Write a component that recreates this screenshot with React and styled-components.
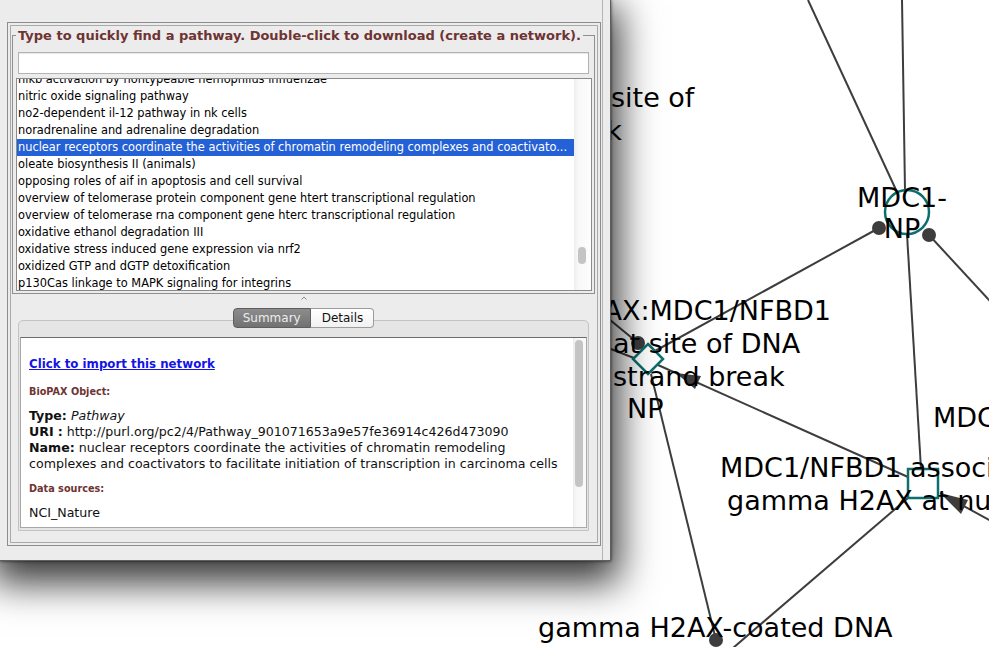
import styled, { createGlobalStyle } from 'styled-components';

const GlobalStyle = createGlobalStyle`
  html, body {
    margin: 0;
    padding: 0;
    background: #fff;
    overflow: hidden;
  }
  * {
    box-sizing: border-box;
  }
`;

const Desktop = styled.div`
  position: relative;
  width: 989px;
  height: 647px;
  overflow: hidden;
  background: #fff;
  font-family: "DejaVu Sans", "Liberation Sans", sans-serif;
`;

const Canvas = styled.svg`
  position: absolute;
  left: 0;
  top: 0;
  width: 989px;
  height: 647px;
`;

const Dialog = styled.div`
  position: absolute;
  left: 0;
  top: 0;
  width: 611px;
  height: 561px;
  display: flex;
  background: #ececec;
  border-right: 1px solid #5f5f5f;
  border-bottom: 1px solid #5f5f5f;
  box-shadow: 0 0 3px rgba(0, 0, 0, 0.7), 0 14px 36px 8px rgba(0, 0, 0, 0.78);
`;

const Body = styled.div`
  width: 603px;
  display: flex;
  flex-direction: column;
  border-right: 1px solid #b4b4b4;
`;

const TopStrip = styled.div`
  height: 22px;
  flex: none;
`;

const Frame = styled.div`
  margin-left: 7px;
  width: 594px;
  height: 524px;
  flex: none;
  border: 1px solid #8c8c8c;
  box-shadow: inset 0 0 0 2px #ececec, inset 0 0 0 3px #a9a9a9;
  padding: 5px 5px 0 4px;
  display: flex;
  flex-direction: column;
`;

const Group = styled.fieldset`
  margin: 0;
  padding: 9px 2px 2px 3px;
  border: 1px solid #8f8f8f;
  min-width: 0;
`;

const GroupTitle = styled.legend`
  padding: 0 2px;
  font: bold 13px/15px "DejaVu Sans", sans-serif;
  color: #6e3333;
  white-space: nowrap;
`;

const SearchField = styled.div`
  height: 22px;
  margin: 0 3px 4px 2px;
  background: #fff;
  border: 1px solid #b3b3b3;
  box-shadow: inset 0 1px 1px rgba(0, 0, 0, 0.1);
`;

const ListBox = styled.div`
  height: 213px;
  display: flex;
  background: #fff;
  border: 1px solid #8a8a8a;
  overflow: hidden;
`;

const ListViewport = styled.div`
  flex: 1;
  min-width: 0;
  overflow: hidden;
`;

const ListRows = styled.div`
  margin-top: ${(p) => -p.$scroll}px;
`;

const Row = styled.div`
  height: 17px;
  line-height: 17px;
  padding-left: 1px;
  font-size: 11.4px;
  white-space: nowrap;
  overflow: hidden;
  color: ${(p) => (p.$selected ? '#fff' : '#000')};
  background: ${(p) => (p.$selected ? '#2461d6' : 'transparent')};
`;

const ListScroll = styled.div`
  width: 17px;
  flex: none;
  padding: ${(p) => p.$top}px 0 0 4px;
  background: linear-gradient(to right, #ececec, #f8f8f8 4px, #fdfdfd);
`;

const Thumb = styled.div`
  width: 8px;
  height: ${(p) => p.$h}px;
  border-radius: 4px;
  background: #c4c4c4;
`;

const Divider = styled.div`
  height: 14px;
  flex: none;
  display: flex;
  justify-content: center;
  padding-top: 2px;
`;

const TabPane = styled.div`
  margin: 0 6px;
  display: flex;
  flex-direction: column;
`;

const TabRow = styled.div`
  height: 20px;
  display: flex;
  justify-content: center;
  position: relative;
  z-index: 1;
  margin-bottom: -8px;
`;

const Tab = styled.div`
  height: 20px;
  font-size: 12px;
  line-height: 18px;
  border: 1px solid ${(p) => (p.$active ? '#5e5e5e' : '#9c9c9c')};
  border-left-width: ${(p) => (p.$active ? 1 : 0)}px;
  border-radius: ${(p) => (p.$active ? '4px 0 0 4px' : '0 4px 4px 0')};
  padding: ${(p) => (p.$active ? '0 9px' : '0 10px 0 11px')};
  color: ${(p) => (p.$active ? '#ededed' : '#111')};
  background: ${(p) =>
    p.$active
      ? 'linear-gradient(#8c8c8c, #727272)'
      : 'linear-gradient(#ffffff, #f1f1f1)'};
`;

const TabBox = styled.div`
  height: 211px;
  display: flex;
  border: 1px solid #c3c3c3;
  border-radius: 5px 5px 0 0;
  background: #e5e5e5;
  padding: 16px 1px 2px 1px;
`;

const InfoPanel = styled.div`
  flex: 1;
  display: flex;
  background: #fff;
  border: 1px solid #a8a8a8;
  border-top-color: #6c6c6c;
  overflow: hidden;
`;

const InfoBody = styled.div`
  flex: 1;
  min-width: 0;
  padding: 18px 8px 0 8px;
  font-size: 12.6px;
  line-height: 16px;
  color: #111;
  white-space: nowrap;
`;

const InfoScroll = styled.div`
  width: 13px;
  flex: none;
  padding: 2px 0 0 2px;
  background: linear-gradient(to right, #ebebeb, #f7f7f7 3px, #f9f9f9);
`;

const ImportLink = styled.a`
  display: block;
  height: 16px;
  font-size: 11.8px;
  font-weight: bold;
  color: #1414e6;
  text-decoration: underline;
`;

const Section = styled.div`
  margin-top: ${(p) => p.$gap}px;
  font-size: 9.7px;
  font-weight: bold;
  color: #6e3333;
`;

const Line = styled.div`
  margin-top: ${(p) => p.$gap || 0}px;
  height: 16px;
`;

const Key = styled.b`
  font-weight: bold;
`;

const pathways = [
  'nikb activation by nontypeable hemophilus influenzae',
  'nitric oxide signaling pathway',
  'no2-dependent il-12 pathway in nk cells',
  'noradrenaline and adrenaline degradation',
  'nuclear receptors coordinate the activities of chromatin remodeling complexes and coactivato...',
  'oleate biosynthesis II (animals)',
  'opposing roles of aif in apoptosis and cell survival',
  'overview of telomerase protein component gene htert transcriptional regulation',
  'overview of telomerase rna component gene hterc transcriptional regulation',
  'oxidative ethanol degradation III',
  'oxidative stress induced gene expression via nrf2',
  'oxidized GTP and dGTP detoxification',
  'p130Cas linkage to MAPK signaling for integrins',
];

const edges = [
  [808, 0, 897, 192],
  [902, 0, 905, 190],
  [907, 234, 921, 469],
  [879, 228, 655, 351],
  [929, 235, 1000, 312],
  [908, 477, 658, 365],
  [651, 374, 716, 640],
  [908, 498, 719, 660],
  [1000, 526, 940, 493],
  [598, 310, 638, 343],
  [598, 344, 634, 358],
];

const dots = [
  [879, 228],
  [929, 235],
  [638, 343],
  [716, 640],
];

const labels = [
  { x: 611, y: 107, t: 'site of' },
  { x: 622, y: 140, t: 'break', a: 'end' },
  { x: 902, y: 207, t: 'MDC1-', a: 'middle' },
  { x: 902, y: 238, t: 'NP', a: 'middle' },
  { x: 831, y: 320, t: 'gamma H2AX:MDC1/NFBD1', a: 'end' },
  { x: 613, y: 353, t: 'at site of DNA' },
  { x: 613, y: 386, t: 'strand break' },
  { x: 627, y: 418, t: 'NP' },
  { x: 933, y: 427, t: 'MDC1/NFBD1' },
  { x: 720, y: 477, t: 'MDC1/NFBD1 associates with' },
  { x: 727, y: 510, t: 'gamma H2AX at nuclear foci' },
  { x: 538, y: 637, t: 'gamma H2AX-coated DNA' },
];

function Network() {
  const teal = '#0e6f6f';
  return (
    <Canvas viewBox="0 0 989 647">
      <g stroke="#3d3d3d" strokeWidth="2" fill="none">
        {edges.map(([x1, y1, x2, y2], i) => (
          <line key={i} x1={x1} y1={y1} x2={x2} y2={y2} />
        ))}
      </g>
      <g fill="#3d3d3d">
        {dots.map(([cx, cy], i) => (
          <circle key={i} cx={cx} cy={cy} r="7" />
        ))}
        <polygon points="676,373 695,389 701,376" />
        <polygon points="940,493 968,500 961,514" />
      </g>
      <g stroke={teal} strokeWidth="2.5" fill="none">
        <circle cx="907" cy="212" r="22" />
        <polygon points="648,344 663,359 648,374 633,359" />
        <rect x="908" y="469" width="30" height="29" />
      </g>
      <g fontFamily="DejaVu Sans, sans-serif" fontSize="27" fill="#000">
        {labels.map((l, i) => (
          <text key={i} x={l.x} y={l.y} textAnchor={l.a || 'start'}>
            {l.t}
          </text>
        ))}
      </g>
    </Canvas>
  );
}

export default function App() {
  return (
    <Desktop>
      <GlobalStyle />
      <Network />
      <Dialog>
        <Body>
          <TopStrip />
          <Frame>
            <Group>
              <GroupTitle>
                Type to quickly find a pathway. Double-click to download (create a network).
              </GroupTitle>
              <SearchField />
              <ListBox>
                <ListViewport>
                  <ListRows $scroll={8}>
                    {pathways.map((name, i) => (
                      <Row key={name} $selected={i === 4}>
                        {name}
                      </Row>
                    ))}
                  </ListRows>
                </ListViewport>
                <ListScroll $top={168}>
                  <Thumb $h={17} />
                </ListScroll>
              </ListBox>
            </Group>
            <Divider>
              <svg width="6" height="4" viewBox="0 0 6 4">
                <path d="M0.5 3.5 L3 1 L5.5 3.5" stroke="#8a8a8a" strokeWidth="1" fill="none" />
              </svg>
            </Divider>
            <TabPane>
              <TabRow>
                <Tab $active>Summary</Tab>
                <Tab>Details</Tab>
              </TabRow>
              <TabBox>
                <InfoPanel>
                  <InfoBody>
                    <ImportLink href="#">Click to import this network</ImportLink>
                    <Section $gap={12}>BioPAX Object:</Section>
                    <Line $gap={8}>
                      <Key>Type:</Key> <i>Pathway</i>
                    </Line>
                    <Line>
                      <Key>URI</Key> <Key>:</Key> http://purl.org/pc2/4/Pathway_901071653a9e57fe36914c426d473090
                    </Line>
                    <Line>
                      <Key>Name:</Key> nuclear receptors coordinate the activities of chromatin remodeling
                    </Line>
                    <Line>
                      complexes and coactivators to facilitate initiation of transcription in carcinoma cells
                    </Line>
                    <Section $gap={9}>Data sources:</Section>
                    <Line $gap={8}>NCI_Nature</Line>
                  </InfoBody>
                  <InfoScroll>
                    <Thumb $h={147} />
                  </InfoScroll>
                </InfoPanel>
              </TabBox>
            </TabPane>
          </Frame>
        </Body>
      </Dialog>
    </Desktop>
  );
}
